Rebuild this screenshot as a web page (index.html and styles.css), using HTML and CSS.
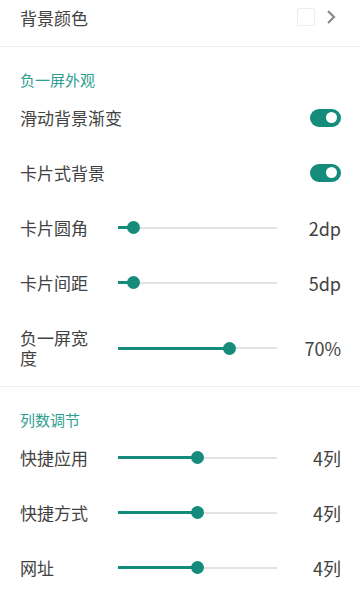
FILE: index.html
```html
<!DOCTYPE html>
<html lang="zh-CN">
<head>
    <meta charset="UTF-8">
    <meta name="viewport" content="width=device-width, initial-scale=1.0">
    <title>负一屏设置</title>
    <link rel="stylesheet" href="styles.css">
</head>
<body>
    <div class="group top">
        <div class="row">
            <span class="label">背景颜色</span>
            <span class="color-box"></span>
            <svg class="chevron" width="10" height="16" viewBox="0 0 10 16">
                <path d="M2 2 L8 8 L2 14" fill="none" stroke="#8a8a8a" stroke-width="2.2"/>
            </svg>
        </div>
    </div>

    <div class="group">
        <div class="group-title">负一屏外观</div>
        <div class="row">
            <span class="label wide">滑动背景渐变</span>
            <span class="switch on"></span>
        </div>
        <div class="row">
            <span class="label wide">卡片式背景</span>
            <span class="switch on"></span>
        </div>
        <div class="row">
            <span class="label">卡片圆角</span>
            <div class="slider"><div class="fill" style="width: 10%"></div></div>
            <span class="value">2dp</span>
        </div>
        <div class="row">
            <span class="label">卡片间距</span>
            <div class="slider"><div class="fill" style="width: 10%"></div></div>
            <span class="value">5dp</span>
        </div>
        <div class="row tall">
            <span class="label">负一屏宽度</span>
            <div class="slider"><div class="fill" style="width: 70%"></div></div>
            <span class="value">70%</span>
        </div>
    </div>

    <div class="group">
        <div class="group-title">列数调节</div>
        <div class="row">
            <span class="label">快捷应用</span>
            <div class="slider"><div class="fill" style="width: 50%"></div></div>
            <span class="value">4列</span>
        </div>
        <div class="row">
            <span class="label">快捷方式</span>
            <div class="slider"><div class="fill" style="width: 50%"></div></div>
            <span class="value">4列</span>
        </div>
        <div class="row">
            <span class="label">网址</span>
            <div class="slider"><div class="fill" style="width: 50%"></div></div>
            <span class="value">4列</span>
        </div>
    </div>
</body>
</html>
```

FILE: styles.css
```css
body {
    margin: 0;
    background: #fff;
    font-family: "Noto Sans CJK SC", "Noto Sans", sans-serif;
    color: #424242;
    overflow: hidden;
}
.group {
    border-bottom: 1px solid #eeeeee;
}
.group.top .row {
    height: 35px;
    padding-bottom: 11px;
}
.group-title {
    padding: 23px 20px 0;
    height: 20px;
    line-height: 20px;
    font-size: 15px;
    color: #2e9e8f;
}
.row {
    display: flex;
    align-items: center;
    height: 55px;
    padding: 0 19px 0 20px;
}
.row.tall {
    height: 76px;
}
.label {
    width: 72px;
    flex-shrink: 0;
    font-size: 17px;
    line-height: 20px;
}
.label.wide {
    width: auto;
    flex: 1;
}
.color-box {
    margin-left: auto;
    width: 16px;
    height: 16px;
    border: 1px solid #ededed;
    border-radius: 2px;
    margin-right: 11px;
    margin-top: -2px;
}
.chevron {
    margin-right: 5px;
    margin-top: -1px;
}
.switch {
    width: 31px;
    height: 18px;
    border-radius: 9px;
    background: #158b7b;
    position: relative;
}
.switch::after {
    content: "";
    position: absolute;
    top: 3.5px;
    right: 4.5px;
    width: 11px;
    height: 11px;
    border-radius: 50%;
    background: #fff;
}
.slider {
    margin-left: 26px;
    width: 159px;
    height: 2px;
    background: #e2e2e2;
    position: relative;
}
.fill {
    height: 3px;
    margin-top: -0.5px;
    background: #158b7b;
    position: relative;
}
.fill::after {
    content: "";
    position: absolute;
    right: -6.5px;
    top: -5px;
    width: 13px;
    height: 13px;
    border-radius: 50%;
    background: #158b7b;
}
.value {
    flex: 1;
    text-align: right;
    font-size: 18px;
}
```
